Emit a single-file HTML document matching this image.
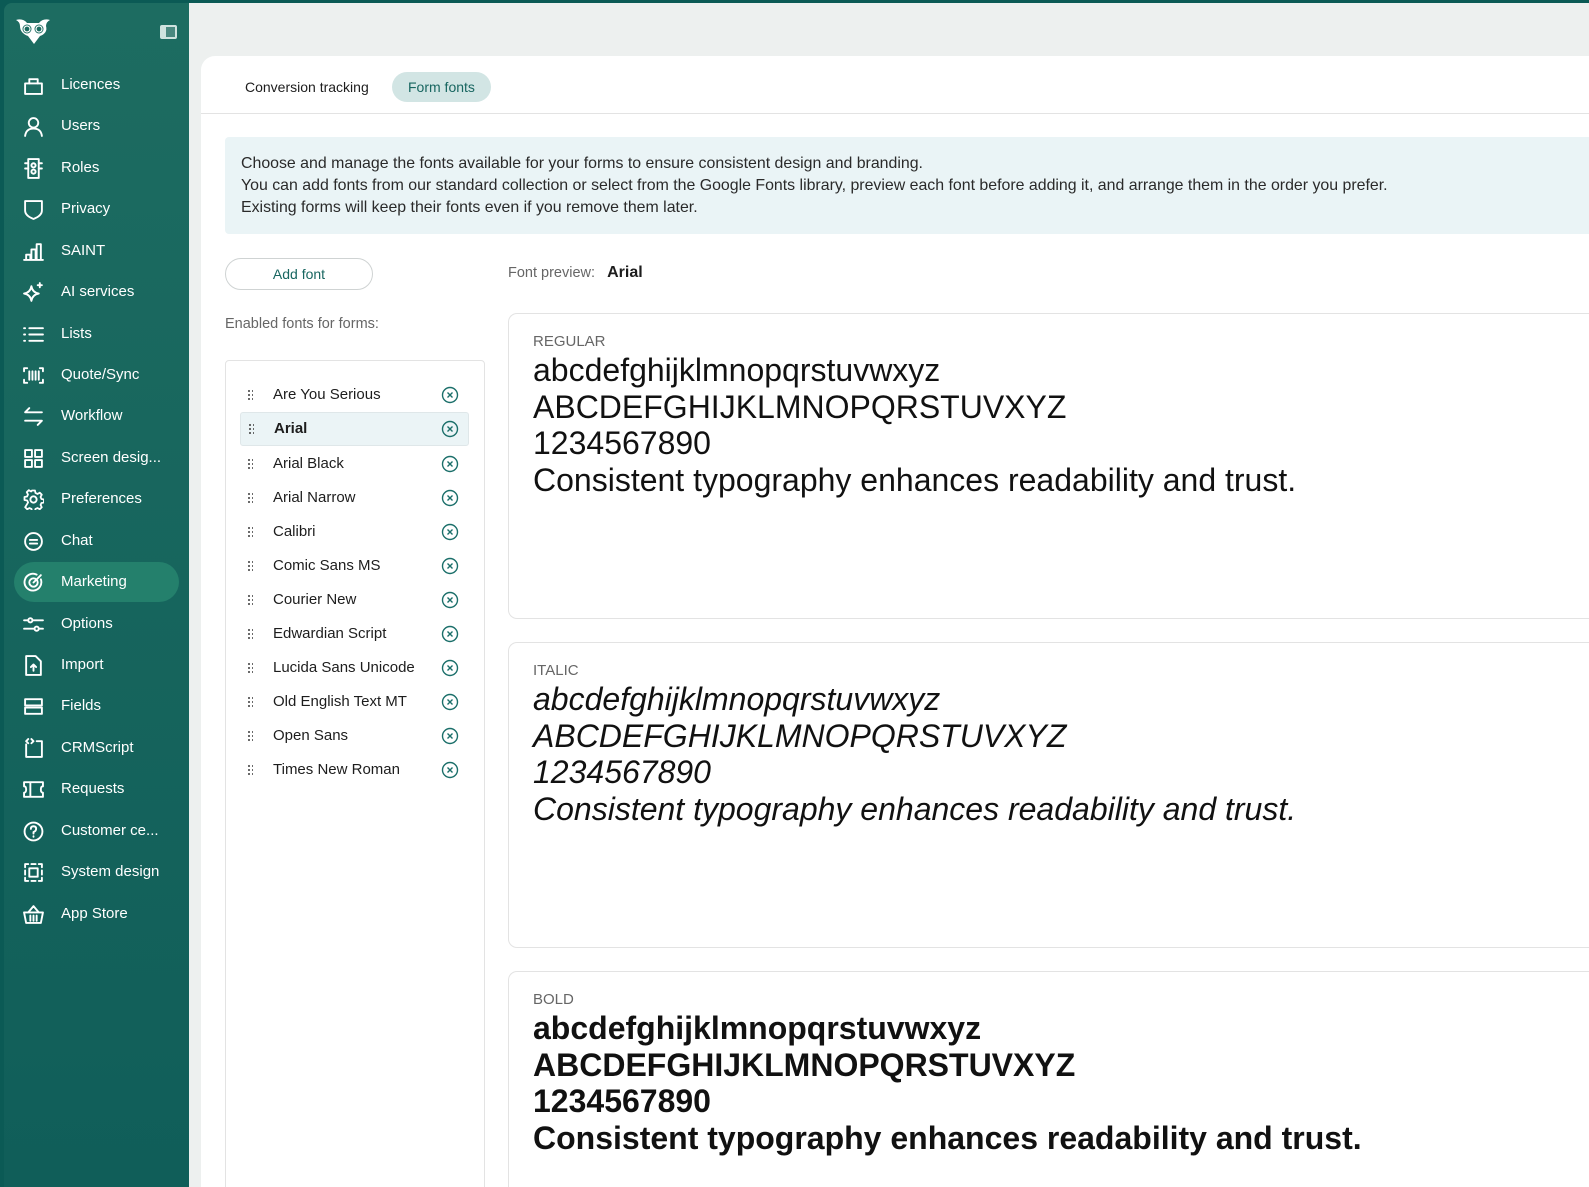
<!DOCTYPE html>
<html style="width:1589px;height:1187px;overflow:hidden"><head><meta charset="utf-8"><style>
*{box-sizing:border-box;margin:0;padding:0}
body{width:1589px;height:1187px;overflow:hidden;background:#edf0ef;font-family:"Liberation Sans",sans-serif;position:relative}
.top{position:absolute;left:0;top:0;width:1589px;height:3px;background:#0b5a55}
.sb{position:absolute;left:0;top:0;width:189px;height:1187px;background:#0b5a55}
.sbi{position:absolute;left:4px;top:3px;width:185px;height:1184px;border-radius:8px 0 0 0;background:linear-gradient(#1d6c61,#105e59)}
.it{position:absolute;left:14px;width:165px;height:40px;color:#fff;font-size:15px;line-height:40px;padding-left:47px}
.it svg{position:absolute;left:9px;top:10px;width:21px;height:21px;fill:none;stroke:#fff;stroke-width:1.8;stroke-linecap:round;stroke-linejoin:round}
.act{background:#24806c;border-radius:20px}
.card{position:absolute;left:201px;top:56px;width:1388px;height:1131px;background:#fff;border-radius:14px 0 0 0;overflow:hidden}
.tabs{position:absolute;left:0;top:0;width:100%;height:58px;border-bottom:1px solid #e3e3e3}
.tab{position:absolute;top:16px;height:30px;line-height:30px;font-size:14px;color:#1d1d1d;padding:0 16px;border-radius:15px}
.info{position:absolute;left:24px;top:81px;width:1364px;height:97px;background:#eaf4f6;border-radius:4px 0 0 4px;padding:16px;font-size:15.9px;line-height:22px;color:#2a2a2a;white-space:nowrap}
.btn{position:absolute;left:24px;top:202px;width:148px;height:32px;border:1px solid #cfd3d3;border-radius:16px;text-align:center;line-height:30px;font-size:14px;color:#186660}
.lbl{position:absolute;font-size:14.5px;color:#666}
.list{position:absolute;left:24px;top:304px;width:260px;height:840px;border:1px solid #e3e3e3;border-radius:4px}
.row{position:absolute;left:14px;width:229px;height:34px;font-size:15px;color:#1d1d1d;line-height:34px;padding-left:33px}
.row.sel{background:#ebf4f6;border:1px solid #dfe7e9;border-radius:3px;font-weight:bold;line-height:32px}
.row .d{position:absolute;left:7px;top:11px;width:6px;height:12px;background-image:radial-gradient(circle,#444 0.9px,transparent 1.1px);background-size:4px 4px}
.row svg{position:absolute;left:201px;top:8px;width:18px;height:18px}
.pv{position:absolute;left:307px;width:1081px;height:306px;border:1px solid #e3e3e3;border-right:none;border-radius:9px 0 0 9px;padding:18px 24px;white-space:nowrap}
.pv .k{font-size:15px;color:#666;line-height:19px;margin-bottom:1px}
.pv .t{font-family:"Liberation Sans",Arial,sans-serif;font-size:32px;line-height:36.5px;color:#111}
</style></head><body>
<div class="top"></div>
<div class="sb"><div class="sbi"></div>
<svg style="position:absolute;left:15px;top:17px" width="36" height="30" viewBox="0 0 36 30"><path d="M1 3 Q8 1 12 6 L24 6 Q28 1 35 3 Q31 5 31 9 Q33 16 25 19 L19 27 L13 19 Q5 16 5 9 Q5 5 1 3Z" fill="#fff"/><circle cx="12" cy="12" r="4.5" fill="#1c6b60"/><circle cx="24" cy="12" r="4.5" fill="#1c6b60"/><circle cx="12" cy="12" r="3" fill="none" stroke="#fff" stroke-width="1.2"/><circle cx="24" cy="12" r="3" fill="none" stroke="#fff" stroke-width="1.2"/></svg>
<div style="position:absolute;left:160px;top:25px;width:17px;height:14px;border:2px solid #cfe3df;border-radius:2px;background:#fff3"><div style="width:4px;height:10px;background:#cfe3df"></div></div>

<div class="it" style="top:65px"><svg viewBox="0 0 20 20"><rect x="2" y="8" width="16" height="10"/><path d="M6 8V4h8v4"/></svg>Licences</div>
<div class="it" style="top:106px"><svg viewBox="0 0 20 20"><circle cx="10" cy="6.5" r="4.5"/><path d="M2 19q1-7 8-7t8 7"/></svg>Users</div>
<div class="it" style="top:148px"><svg viewBox="0 0 20 20"><rect x="5" y="1" width="10" height="18"/><circle cx="10" cy="7" r="2"/><circle cx="10" cy="13" r="2"/><path d="M2 5h3M2 10h3M15 5h3M15 10h3"/></svg>Roles</div>
<div class="it" style="top:189px"><svg viewBox="0 0 20 20"><path d="M2 2h16v9q0 5-8 8-8-3-8-8z"/></svg>Privacy</div>
<div class="it" style="top:231px"><svg viewBox="0 0 20 20"><path d="M1 18h18M3 18v-5h4v5M8 18V8h4v10M13 18V3h4v15"/></svg>SAINT</div>
<div class="it" style="top:272px"><svg viewBox="0 0 20 20"><path d="M8 4q1 6 7 7-6 1-7 7-1-6-7-7 6-1 7-7zM16 1v4M14 3h4"/></svg>AI services</div>
<div class="it" style="top:314px"><svg viewBox="0 0 20 20"><path d="M6 4h13M6 10h13M6 16h13M1 4h1M1 10h1M1 16h1"/></svg>Lists</div>
<div class="it" style="top:355px"><svg viewBox="0 0 20 20"><path d="M1 6V3h3M16 3h3v3M19 14v3h-3M4 17H1v-3M6 6v8M9 6v8M12 6v8M15 6v8"/></svg>Quote/Sync</div>
<div class="it" style="top:396px"><svg viewBox="0 0 20 20"><path d="M18 6H2l4-4M2 14h16l-4 4"/></svg>Workflow</div>
<div class="it" style="top:438px"><svg viewBox="0 0 20 20"><rect x="2" y="2" width="6.5" height="6.5"/><rect x="11.5" y="2" width="6.5" height="6.5"/><rect x="2" y="11.5" width="6.5" height="6.5"/><rect x="11.5" y="11.5" width="6.5" height="6.5"/></svg>Screen desig...</div>
<div class="it" style="top:479px"><svg viewBox="0 0 20 20"><circle cx="10" cy="10" r="3"/><path d="M8.5 1h3l.5 2.5 2 1 2.3-1.3 2 2-1.2 2.3.9 2 2.5.5v3l-2.5.5-.9 2 1.2 2.3-2 2-2.3-1.2-2 .9-.5 2.5h-3l-.5-2.5-2-.9-2.3 1.2-2-2L4.6 13l-.9-2L1 10.5v-3L3.6 7l.9-2-1.2-2.3 2-2L7.6 2z" transform="scale(.95) translate(.5 .5)"/></svg>Preferences</div>
<div class="it" style="top:521px"><svg viewBox="0 0 20 20"><circle cx="10" cy="10" r="8"/><path d="M6.5 8.5h7M6.5 12h7"/></svg>Chat</div>
<div class="it act" style="top:562px"><svg viewBox="0 0 20 20"><path d="M17 7a8 8 0 1 1-4-4.5"/><circle cx="10" cy="10" r="4"/><path d="M10 10l7-7"/></svg>Marketing</div>
<div class="it" style="top:604px"><svg viewBox="0 0 20 20"><path d="M1 6h18M1 14h18"/><circle cx="7" cy="6" r="2" fill="#1a685e"/><circle cx="13" cy="14" r="2" fill="#1a685e"/></svg>Options</div>
<div class="it" style="top:645px"><svg viewBox="0 0 20 20"><path d="M3 1h9l5 5v13H3z"/><path d="M10 15V9M7.5 11.5 10 9l2.5 2.5"/></svg>Import</div>
<div class="it" style="top:686px"><svg viewBox="0 0 20 20"><rect x="2" y="3" width="16" height="6"/><rect x="2" y="11" width="16" height="6"/></svg>Fields</div>
<div class="it" style="top:728px"><svg viewBox="0 0 20 20"><path d="M3 6v12h15V3h-5M5 1 3 3l2 2M8 1l2 2-2 2"/></svg>CRMScript</div>
<div class="it" style="top:769px"><svg viewBox="0 0 20 20"><path d="M1 3h18v4q-2 0-2 3t2 3v4H1v-4q2 0 2-3T1 7zM7 3v14"/></svg>Requests</div>
<div class="it" style="top:811px"><svg viewBox="0 0 20 20"><circle cx="10" cy="10" r="8.5"/><path d="M7.5 7.5q0-2.5 2.5-2.5t2.5 2.5q0 2-2.5 3v1.5M10 14.5v.5"/></svg>Customer ce...</div>
<div class="it" style="top:852px"><svg viewBox="0 0 20 20"><rect x="6" y="6" width="8" height="8"/><path d="M2 5V2h3M8 2h4M15 2h3v3M18 8v4M18 15v3h-3M12 18H8M5 18H2v-3M2 12V8"/></svg>System design</div>
<div class="it" style="top:894px"><svg viewBox="0 0 20 20"><path d="M1 8h18l-2 10H3zM5 8l5-6 5 6M7 11v5M10 11v5M13 11v5"/></svg>App Store</div>
</div>

<div class="card">
<div class="tabs">
<div class="tab" style="left:28px">Conversion tracking</div>
<div class="tab" style="left:191px;background:#d2e5e4;color:#186660">Form fonts</div>
</div>
<div class="info">Choose and manage the fonts available for your forms to ensure consistent design and branding.<br>You can add fonts from our standard collection or select from the Google Fonts library, preview each font before adding it, and arrange them in the order you prefer.<br>Existing forms will keep their fonts even if you remove them later.</div>
<div class="btn">Add font</div>
<div class="lbl" style="left:24px;top:260px">Enabled fonts for forms:</div>
<div class="lbl" style="left:307px;top:208px">Font preview:&nbsp;&nbsp;&nbsp;<b style="color:#1d1d1d;font-size:16px">Arial</b></div>
<div class="list">
<div class="row" style="top:17px"><i class="d"></i>Are You Serious<svg viewBox="0 0 18 18"><circle cx="9" cy="9" r="7.5" fill="none" stroke="#1b6f6a" stroke-width="1.4"/><path d="M6.5 6.5l5 5M11.5 6.5l-5 5" stroke="#1b6f6a" stroke-width="1.4"/></svg></div>
<div class="row sel" style="top:51px"><i class="d" style="top:10px"></i>Arial<svg style="top:7px;left:200px" viewBox="0 0 18 18"><circle cx="9" cy="9" r="7.5" fill="none" stroke="#1b6f6a" stroke-width="1.4"/><path d="M6.5 6.5l5 5M11.5 6.5l-5 5" stroke="#1b6f6a" stroke-width="1.4"/></svg></div>
<div class="row" style="top:86px"><i class="d"></i>Arial Black<svg viewBox="0 0 18 18"><circle cx="9" cy="9" r="7.5" fill="none" stroke="#1b6f6a" stroke-width="1.4"/><path d="M6.5 6.5l5 5M11.5 6.5l-5 5" stroke="#1b6f6a" stroke-width="1.4"/></svg></div>
<div class="row" style="top:120px"><i class="d"></i>Arial Narrow<svg viewBox="0 0 18 18"><circle cx="9" cy="9" r="7.5" fill="none" stroke="#1b6f6a" stroke-width="1.4"/><path d="M6.5 6.5l5 5M11.5 6.5l-5 5" stroke="#1b6f6a" stroke-width="1.4"/></svg></div>
<div class="row" style="top:154px"><i class="d"></i>Calibri<svg viewBox="0 0 18 18"><circle cx="9" cy="9" r="7.5" fill="none" stroke="#1b6f6a" stroke-width="1.4"/><path d="M6.5 6.5l5 5M11.5 6.5l-5 5" stroke="#1b6f6a" stroke-width="1.4"/></svg></div>
<div class="row" style="top:188px"><i class="d"></i>Comic Sans MS<svg viewBox="0 0 18 18"><circle cx="9" cy="9" r="7.5" fill="none" stroke="#1b6f6a" stroke-width="1.4"/><path d="M6.5 6.5l5 5M11.5 6.5l-5 5" stroke="#1b6f6a" stroke-width="1.4"/></svg></div>
<div class="row" style="top:222px"><i class="d"></i>Courier New<svg viewBox="0 0 18 18"><circle cx="9" cy="9" r="7.5" fill="none" stroke="#1b6f6a" stroke-width="1.4"/><path d="M6.5 6.5l5 5M11.5 6.5l-5 5" stroke="#1b6f6a" stroke-width="1.4"/></svg></div>
<div class="row" style="top:256px"><i class="d"></i>Edwardian Script<svg viewBox="0 0 18 18"><circle cx="9" cy="9" r="7.5" fill="none" stroke="#1b6f6a" stroke-width="1.4"/><path d="M6.5 6.5l5 5M11.5 6.5l-5 5" stroke="#1b6f6a" stroke-width="1.4"/></svg></div>
<div class="row" style="top:290px"><i class="d"></i>Lucida Sans Unicode<svg viewBox="0 0 18 18"><circle cx="9" cy="9" r="7.5" fill="none" stroke="#1b6f6a" stroke-width="1.4"/><path d="M6.5 6.5l5 5M11.5 6.5l-5 5" stroke="#1b6f6a" stroke-width="1.4"/></svg></div>
<div class="row" style="top:324px"><i class="d"></i>Old English Text MT<svg viewBox="0 0 18 18"><circle cx="9" cy="9" r="7.5" fill="none" stroke="#1b6f6a" stroke-width="1.4"/><path d="M6.5 6.5l5 5M11.5 6.5l-5 5" stroke="#1b6f6a" stroke-width="1.4"/></svg></div>
<div class="row" style="top:358px"><i class="d"></i>Open Sans<svg viewBox="0 0 18 18"><circle cx="9" cy="9" r="7.5" fill="none" stroke="#1b6f6a" stroke-width="1.4"/><path d="M6.5 6.5l5 5M11.5 6.5l-5 5" stroke="#1b6f6a" stroke-width="1.4"/></svg></div>
<div class="row" style="top:392px"><i class="d"></i>Times New Roman<svg viewBox="0 0 18 18"><circle cx="9" cy="9" r="7.5" fill="none" stroke="#1b6f6a" stroke-width="1.4"/><path d="M6.5 6.5l5 5M11.5 6.5l-5 5" stroke="#1b6f6a" stroke-width="1.4"/></svg></div>
</div>
<div class="pv" style="top:257px"><div class="k">REGULAR</div><div class="t">abcdefghijklmnopqrstuvwxyz<br>ABCDEFGHIJKLMNOPQRSTUVXYZ<br>1234567890<br>Consistent typography enhances readability and trust.</div></div>
<div class="pv" style="top:586px"><div class="k">ITALIC</div><div class="t" style="font-style:italic">abcdefghijklmnopqrstuvwxyz<br>ABCDEFGHIJKLMNOPQRSTUVXYZ<br>1234567890<br>Consistent typography enhances readability and trust.</div></div>
<div class="pv" style="top:915px;height:230px"><div class="k">BOLD</div><div class="t" style="font-weight:bold">abcdefghijklmnopqrstuvwxyz<br>ABCDEFGHIJKLMNOPQRSTUVXYZ<br>1234567890<br>Consistent typography enhances readability and trust.</div></div>
</div>
</body></html>
